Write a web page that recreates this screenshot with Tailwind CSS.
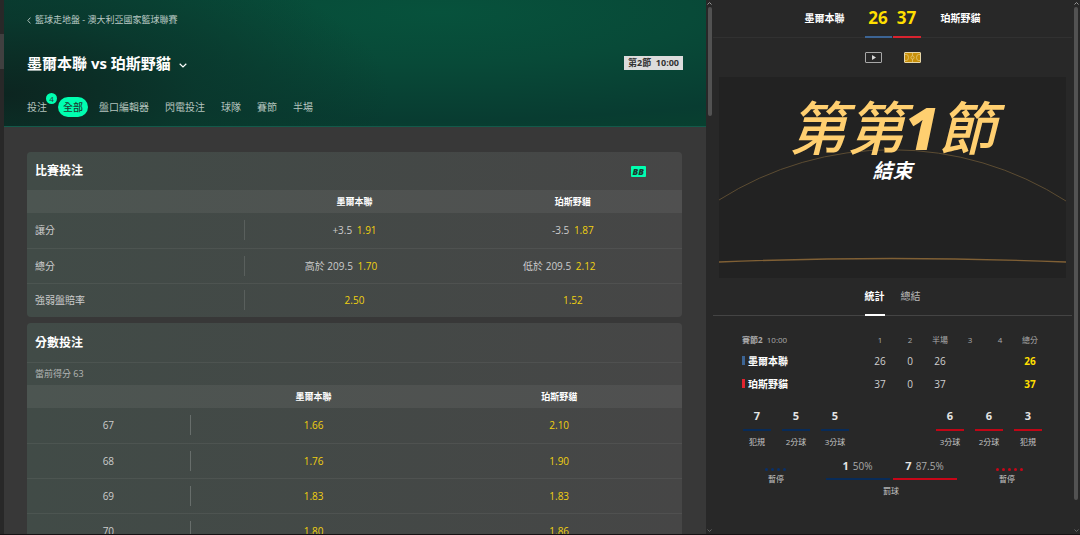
<!DOCTYPE html>
<html lang="zh-Hant">

<head>
    <meta charset="UTF-8">
    <meta name="viewport" content="width=device-width, initial-scale=1.0">
    <title>墨爾本聯 vs 珀斯野貓</title>
    <script src="https://cdn.jsdelivr.net/npm/@tailwindcss/browser@4"></script>
</head>

<body class="bg-[#282828] font-['Open_Sans','Noto_Sans_CJK_TC',sans-serif] text-[10px] leading-[14px] text-[#ccc]">
    <div class="flex h-screen overflow-hidden border-b border-[#161214]">

        <!-- Collapsed menu edge -->
        <div class="w-1 flex-none bg-[#282828] pt-[34px]">
            <div class="h-[35px] bg-[#404040]"></div>
        </div>

        <!-- Match markets -->
        <main class="min-w-0 flex-1 overflow-hidden bg-[#383838]">
            <header class="h-[127px] border-b border-[#13594a] bg-[radial-gradient(ellipse_55%_120%_at_0%_75%,#0c2520_0%,#0b2e26_25%,#0a362ccc_50%,transparent_100%),radial-gradient(ellipse_90%_100%_at_62%_10%,#07523c_0%,#084a38_40%,#083c31_85%,#08402f_100%)] px-[23px] pt-[13px]">
                <a href="#" class="flex w-fit items-center gap-1 text-[9px] text-[#b9c9c4]">
                    <svg class="h-[7px] w-1" viewBox="0 0 4 7" fill="none" stroke="currentColor" stroke-width="0.9"><path d="M3.4 0.6 0.8 3.5l2.6 2.9" /></svg>
                    籃球走地盤 - 澳大利亞國家籃球聯賽
                </a>
                <div class="mt-[26px] flex items-center justify-between">
                    <button class="flex items-center gap-2 text-[15px] leading-5 font-bold text-white">
                        墨爾本聯 vs 珀斯野貓
                        <svg class="mt-1 h-[5px] w-2" viewBox="0 0 8 5" fill="none" stroke="currentColor" stroke-width="1.2"><path d="m0.7 0.7 3.3 3.2L7.3 0.7" /></svg>
                    </button>
                    <div class="bg-[#dcdcdc] px-1 text-[9px] font-bold text-[#333]">第2節&nbsp; 10:00</div>
                </div>
                <nav class="mt-6 flex items-center gap-4 text-[#b4c3be]">
                    <a href="#" class="relative">投注
                        <span class="absolute -top-[7px] -right-[10px] size-[11px] rounded-full bg-[#00ffb0] text-center text-[8px] leading-[11px] text-[#20443a]">4</span>
                    </a>
                    <a href="#" class="-mx-[5px] rounded-full bg-[#00ffb0] px-[5px] leading-5 font-medium text-[#1f3a32]">全部</a>
                    <a href="#">盤口編輯器</a>
                    <a href="#">閃電投注</a>
                    <a href="#">球隊</a>
                    <a href="#">賽節</a>
                    <a href="#">半場</a>
                </nav>
            </header>

            <div class="flex flex-col gap-[6px] px-[23px] pt-[25px] pr-6">
                <!-- Game lines -->
                <section class="overflow-hidden rounded bg-linear-to-r from-[#414b47] to-[#464646]">
                    <div class="flex h-[38px] items-center justify-between pr-9 pl-2">
                        <h2 class="text-[12px] font-bold text-white">比賽投注</h2>
                        <span class="rounded-[1px] bg-[#00ffb0] px-[2px] text-[9px] leading-[11px] font-extrabold text-[#1c3a30] italic">BB</span>
                    </div>
                    <table class="w-full table-fixed text-center">
                        <thead>
                            <tr class="h-[23px] bg-white/6 text-[9px] text-white">
                                <td></td>
                                <th scope="col">墨爾本聯</th>
                                <th scope="col">珀斯野貓</th>
                            </tr>
                        </thead>
                        <tbody>
                            <tr class="h-[35px] border-b border-white/6">
                                <th scope="row" class="text-left font-normal"><div class="border-r border-white/12 pl-2 leading-5">讓分</div></th>
                                <td><button>+3.5 <span class="ml-[2px] text-[#f0d010]">1.91</span></button></td>
                                <td><button>-3.5 <span class="ml-[2px] text-[#f0d010]">1.87</span></button></td>
                            </tr>
                            <tr class="h-[35px] border-b border-white/6">
                                <th scope="row" class="text-left font-normal"><div class="border-r border-white/12 pl-2 leading-5">總分</div></th>
                                <td><button class="mr-[27px]">高於 209.5 <span class="ml-[2px] text-[#f0d010]">1.70</span></button></td>
                                <td><button class="mr-[27px]">低於 209.5 <span class="ml-[2px] text-[#f0d010]">2.12</span></button></td>
                            </tr>
                            <tr class="h-[34px]">
                                <th scope="row" class="text-left font-normal"><div class="border-r border-white/12 pl-2 leading-5">強弱盤賠率</div></th>
                                <td><button class="text-[#f0d010]">2.50</button></td>
                                <td><button class="text-[#f0d010]">1.52</button></td>
                            </tr>
                        </tbody>
                    </table>
                </section>

                <!-- Race to points -->
                <section class="overflow-hidden rounded bg-linear-to-r from-[#414b47] to-[#464646]">
                    <h2 class="flex h-[39px] items-center pl-2 text-[12px] font-bold text-white">分數投注</h2>
                    <p class="border-t border-white/6 pl-2 text-[9px] leading-[22px] text-[#b4b7b6]">當前得分 63</p>
                    <table class="w-full table-fixed text-center">
                        <thead>
                            <tr class="h-[23px] bg-white/6 text-[9px] text-white">
                                <td class="w-1/4"></td>
                                <th scope="col">墨爾本聯</th>
                                <th scope="col">珀斯野貓</th>
                            </tr>
                        </thead>
                        <tbody>
                            <tr class="h-[35px] border-b border-white/6">
                                <th scope="row" class="font-normal"><div class="border-r border-white/20 leading-5">67</div></th>
                                <td><button class="text-[#f0d010]">1.66</button></td>
                                <td><button class="text-[#f0d010]">2.10</button></td>
                            </tr>
                            <tr class="h-[35px] border-b border-white/6">
                                <th scope="row" class="font-normal"><div class="border-r border-white/20 leading-5">68</div></th>
                                <td><button class="text-[#f0d010]">1.76</button></td>
                                <td><button class="text-[#f0d010]">1.90</button></td>
                            </tr>
                            <tr class="h-[35px] border-b border-white/6">
                                <th scope="row" class="font-normal"><div class="border-r border-white/20 leading-5">69</div></th>
                                <td><button class="text-[#f0d010]">1.83</button></td>
                                <td><button class="text-[#f0d010]">1.83</button></td>
                            </tr>
                            <tr class="h-[35px] border-b border-white/6">
                                <th scope="row" class="font-normal"><div class="border-r border-white/20 leading-5">70</div></th>
                                <td><button class="text-[#f0d010]">1.80</button></td>
                                <td><button class="text-[#f0d010]">1.86</button></td>
                            </tr>
                        </tbody>
                    </table>
                </section>
            </div>
        </main>

        <!-- Markets scrollbar -->
        <div class="flex w-[7px] flex-none flex-col items-center justify-between py-[2px] text-[#999]">
            <svg class="h-[3px] w-[5px] flex-none" viewBox="0 0 5 3" fill="none" stroke="currentColor"><path d="M0.5 2.5l2-2 2 2" /></svg>
            <div class="mt-[2px] mb-auto h-[109px] w-1 rounded-full bg-[#525252]"></div>
            <svg class="h-[3px] w-[5px] flex-none" viewBox="0 0 5 3" fill="none" stroke="#666"><path d="M0.5 0.5l2 2 2-2" /></svg>
        </div>

        <!-- Live match panel -->
        <aside class="w-[359px] flex-none">
            <div class="flex h-[38px] justify-center border-b border-[#313131] font-bold text-white">
                <div class="flex-1 pr-5 text-right leading-9">墨爾本聯</div>
                <div class="-mb-px flex gap-px text-center text-[17px] leading-9 text-[#ffdf00]">
                    <div class="w-[27px] border-b-2 border-[#3c6494]">26</div>
                    <div class="w-7 border-b-2 border-[#d8232f]">37</div>
                </div>
                <div class="flex-1 pl-5 leading-9">珀斯野貓</div>
            </div>

            <div class="flex h-[39px] items-center justify-center gap-[22px]">
                <button aria-label="直播">
                    <svg class="h-[11px] w-[17px]" viewBox="0 0 17 11" fill="none"><rect x="0.5" y="0.5" width="16" height="10" rx="0.5" stroke="#a8a8a8" /><path d="M7 3v5l4-2.5z" fill="#d8d8d8" /></svg>
                </button>
                <button aria-label="球場">
                    <svg class="h-[11px] w-[17px]" viewBox="0 0 17 11" fill="none"><rect x="0.5" y="0.5" width="16" height="10" rx="0.5" fill="#c8900a" stroke="#e6d6a8" /><g stroke="#e6cf86" stroke-width="0.7"><path d="M8.5 1v2.9M8.5 7.1V10M1 2.500h1.500a2 3 0 0 1 0 6H1M16 2.500h-1.500a2 3 0 0 0 0 6H16" /><circle cx="8.500" cy="5.500" r="1.600" /></g></svg>
                </button>
            </div>

            <!-- Court -->
            <div class="relative mx-[6px] h-[201px] overflow-hidden bg-[#222]">
                <svg class="absolute inset-0 size-full" viewBox="0 0 347 201" preserveAspectRatio="none" fill="none">
                    <path d="M0 123A322 322 0 0 1 347 124" stroke="#5c4c32" />
                    <path d="M0 185Q173 178 347 185" stroke="#806035" stroke-width="1.300" />
                </svg>
                <div class="relative pt-[22px] text-center italic">
                    <p class="text-[58px] leading-[58px] font-medium text-[#ffcf70]">第第<span class="font-extrabold">1</span>節</p>
                    <p class="mt-1 text-[20px] leading-5 font-bold text-white">結束</p>
                </div>
            </div>

            <div class="flex h-[38px] justify-center gap-4 border-b border-[#444]">
                <button class="-mb-px border-b-2 border-white font-bold text-white">統計</button>
                <button class="border-b border-transparent text-[#b8b8b8]">總結</button>
            </div>

            <!-- Score by period -->
            <div class="pt-[15px] pr-[27px] pl-[29px]">
                <table class="w-full table-fixed text-center text-[#d0d0d0]">
                    <thead>
                        <tr class="h-[18px] text-[8px] text-[#aaa]">
                            <td class="text-left"><b>賽節2</b>&nbsp; 10:00</td>
                            <th scope="col" class="w-[30px] font-normal">1</th>
                            <th scope="col" class="w-[30px] font-normal">2</th>
                            <th scope="col" class="w-[30px] font-normal">半場</th>
                            <th scope="col" class="w-[30px] font-normal">3</th>
                            <th scope="col" class="w-[30px] font-normal">4</th>
                            <th scope="col" class="w-[30px] font-normal">總分</th>
                        </tr>
                    </thead>
                    <tbody>
                        <tr class="h-[23px]">
                            <th scope="row" class="text-left text-white"><div class="flex items-center gap-[3px]"><i class="h-[9px] w-[3px] bg-[#3c6494]"></i>墨爾本聯</div></th>
                            <td>26</td>
                            <td>0</td>
                            <td>26</td>
                            <td></td>
                            <td></td>
                            <td class="font-bold text-[#ffdf00]">26</td>
                        </tr>
                        <tr class="h-[23px]">
                            <th scope="row" class="text-left text-white"><div class="flex items-center gap-[3px]"><i class="h-[9px] w-[3px] bg-[#e0242f]"></i>珀斯野貓</div></th>
                            <td>37</td>
                            <td>0</td>
                            <td>37</td>
                            <td></td>
                            <td></td>
                            <td class="font-bold text-[#ffdf00]">37</td>
                        </tr>
                    </tbody>
                </table>
            </div>

            <!-- Team stats -->
            <div class="mt-[14px] flex justify-between px-[30px] text-center text-[8px] text-[#c4c4c4]">
                <div class="flex gap-[11px]">
                    <div class="w-7"><b class="mb-[4px] block border-b-2 border-[#082b58] pb-[6px] text-[11px] text-[#e4e4e4]">7</b>犯規</div>
                    <div class="w-7"><b class="mb-[4px] block border-b-2 border-[#082b58] pb-[6px] text-[11px] text-[#e4e4e4]">5</b>2分球</div>
                    <div class="w-7"><b class="mb-[4px] block border-b-2 border-[#082b58] pb-[6px] text-[11px] text-[#e4e4e4]">5</b>3分球</div>
                </div>
                <div class="flex gap-[11px]">
                    <div class="w-7"><b class="mb-[4px] block border-b-2 border-[#c00616] pb-[6px] text-[11px] text-[#e4e4e4]">6</b>3分球</div>
                    <div class="w-7"><b class="mb-[4px] block border-b-2 border-[#c00616] pb-[6px] text-[11px] text-[#e4e4e4]">6</b>2分球</div>
                    <div class="w-7"><b class="mb-[4px] block border-b-2 border-[#c00616] pb-[6px] text-[11px] text-[#e4e4e4]">3</b>犯規</div>
                </div>
            </div>

            <!-- Timeouts and free throws -->
            <div class="mt-[10px] flex justify-between px-[52px] pr-[49px] text-[8px] text-[#c4c4c4]">
                <div class="pt-[9px]">
                    <div class="flex gap-[3px]">
                        <i class="size-[3px] rounded-full bg-[#08306a]"></i>
                        <i class="size-[3px] rounded-full bg-[#08306a]"></i>
                        <i class="size-[3px] rounded-full bg-[#08306a]"></i>
                        <i class="size-[3px] rounded-full bg-[#08306a]"></i>
                    </div>
                    <p class="mt-px pl-[3px]">暫停</p>
                </div>
                <div class="text-center">
                    <div class="flex gap-[3px] text-[10px] text-[#aaa]">
                        <div class="w-16 border-b-2 border-[#082b58] pb-[5px]"><b class="mr-1 text-[11px] text-[#e4e4e4]">1</b>50%</div>
                        <div class="w-16 border-b-2 border-[#c80618] pb-[5px]"><b class="mr-1 text-[11px] text-[#e4e4e4]">7</b>87.5%</div>
                    </div>
                    <p class="mt-1">罰球</p>
                </div>
                <div class="pt-[9px]">
                    <div class="flex gap-[3px]">
                        <i class="size-[3px] rounded-full bg-[#c80618]"></i>
                        <i class="size-[3px] rounded-full bg-[#c80618]"></i>
                        <i class="size-[3px] rounded-full bg-[#c80618]"></i>
                        <i class="size-[3px] rounded-full bg-[#c80618]"></i>
                        <i class="size-[3px] rounded-full bg-[#c80618]"></i>
                    </div>
                    <p class="mt-px pl-[3px]">暫停</p>
                </div>
            </div>
        </aside>

        <!-- Panel scrollbar -->
        <div class="flex w-2 flex-none flex-col items-center justify-between py-[2px] text-[#999]">
            <svg class="h-[3px] w-[5px] flex-none" viewBox="0 0 5 3" fill="none" stroke="currentColor"><path d="M0.5 2.5l2-2 2 2" /></svg>
            <div class="my-[2px] w-1 flex-1 rounded-full bg-[#525252]"></div>
            <svg class="mt-[27px] h-[3px] w-[5px] flex-none" viewBox="0 0 5 3" fill="none" stroke="#666"><path d="M0.5 0.5l2 2 2-2" /></svg>
        </div>
    </div>
</body>

</html>
